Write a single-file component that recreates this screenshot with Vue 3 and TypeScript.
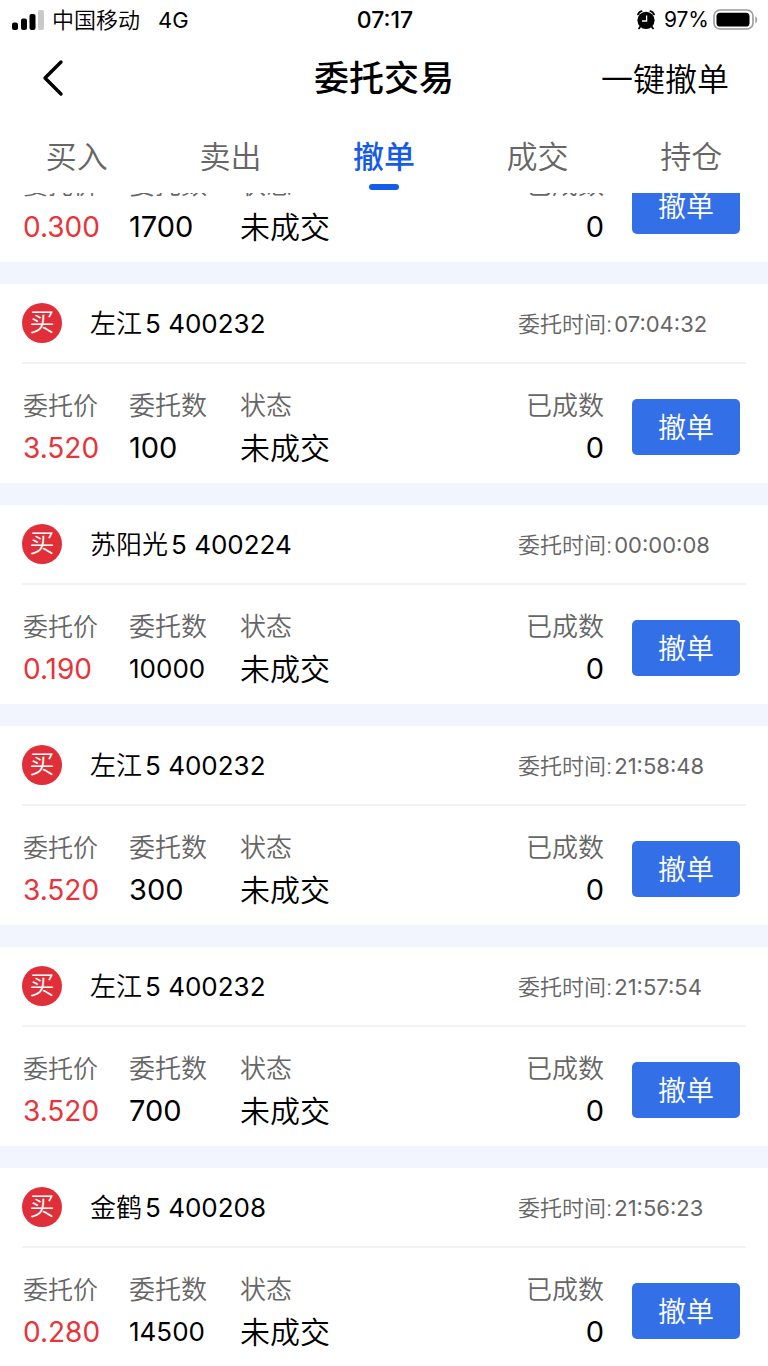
<script setup lang="ts">
import { onMounted, ref } from 'vue'

interface Order {
  id: number
  name: string
  code: string
  time: string
  price: string
  amount: string
  filled: string
}

const tabs: string[] = ['买入', '卖出', '撤单', '成交', '持仓']
const activeTab = ref('撤单')

const orders = ref<Order[]>([
  { id: 1, name: '左江', code: '5 400232', time: '07:04:35', price: '0.300', amount: '1700', filled: '0' },
  { id: 2, name: '左江', code: '5 400232', time: '07:04:32', price: '3.520', amount: '100', filled: '0' },
  { id: 3, name: '苏阳光', code: '5 400224', time: '00:00:08', price: '0.190', amount: '10000', filled: '0' },
  { id: 4, name: '左江', code: '5 400232', time: '21:58:48', price: '3.520', amount: '300', filled: '0' },
  { id: 5, name: '左江', code: '5 400232', time: '21:57:54', price: '3.520', amount: '700', filled: '0' },
  { id: 6, name: '金鹤', code: '5 400208', time: '21:56:23', price: '0.280', amount: '14500', filled: '0' },
])

const list = ref<HTMLElement | null>(null)

onMounted(() => {
  if (list.value) list.value.scrollTop = 130
})
</script>

<template>
  <div class="screen">
    <div class="status">
      <div class="status-left">
        <svg class="signal" width="32" height="20" viewBox="0 0 32 20" aria-hidden="true">
          <rect x="0" y="12.5" width="6" height="7.5" rx="2" />
          <rect x="9" y="8.5" width="6" height="11.5" rx="2" />
          <rect x="17.5" y="4" width="6" height="16" rx="2" />
          <rect x="26" y="0" width="6" height="20" rx="2" fill="#c9c9c9" />
        </svg>
        <span class="carrier">中国移动</span>
        <span class="network">4G</span>
      </div>
      <div class="clock">07:17</div>
      <div class="status-right">
        <svg width="18" height="20" viewBox="0 0 18 20" aria-hidden="true">
          <circle cx="9" cy="10.3" r="8.6" />
          <path d="M1 4.4C1.6 2.8 3 1.6 4.6 1.2M17 4.4C16.4 2.8 15 1.6 13.4 1.2" fill="none" stroke="#000" stroke-width="1.8" stroke-linecap="round" />
          <path d="M3.4 16.4 2 18.4M14.6 16.4 16 18.4" stroke="#000" stroke-width="1.8" stroke-linecap="round" />
          <path d="M9.6 5.4V11H5" fill="none" stroke="#fff" stroke-width="1.3" />
        </svg>
        <span class="percent">97%</span>
        <svg width="45" height="22" viewBox="0 0 45 22" aria-hidden="true">
          <rect x="1" y="1" width="39" height="19" rx="6" fill="#fff" stroke="#9b9b9b" stroke-width="1.6" />
          <rect x="3.5" y="3.7" width="33" height="13.8" rx="3.6" />
          <path d="M42.4 7.2c2.4 1 2.4 6 0 7z" fill="#9b9b9b" />
        </svg>
      </div>
    </div>

    <header class="header">
      <button class="back" type="button" aria-label="返回">
        <svg width="22" height="38" viewBox="0 0 22 38" aria-hidden="true">
          <path d="M19 3 3 19 19 35" fill="none" stroke="#000" stroke-width="3.4" stroke-linecap="round" stroke-linejoin="round" />
        </svg>
      </button>
      <h1>委托交易</h1>
      <button class="cancel-all" type="button">一键撤单</button>
    </header>

    <nav class="tabs">
      <button
        v-for="tab in tabs"
        :key="tab"
        type="button"
        class="tab"
        :class="{ active: tab === activeTab }"
        @click="activeTab = tab"
      >
        {{ tab }}
      </button>
    </nav>

    <main ref="list" class="list">
      <article v-for="order in orders" :key="order.id" class="card">
        <div class="card-head">
          <span class="badge">买</span>
          <h2>{{ order.name }}<span class="code">{{ order.code }}</span></h2>
          <span class="placed">委托时间:<time>{{ order.time }}</time></span>
        </div>
        <div class="card-body">
          <dl class="cost">
            <dt>委托价</dt>
            <dd>{{ order.price }}</dd>
          </dl>
          <dl>
            <dt>委托数</dt>
            <dd class="amount" :class="{ long: order.amount.length > 4 }">{{ order.amount }}</dd>
          </dl>
          <dl>
            <dt>状态</dt>
            <dd class="state">未成交</dd>
          </dl>
          <dl class="filled">
            <dt>已成数</dt>
            <dd class="amount">{{ order.filled }}</dd>
          </dl>
          <button class="cancel" type="button">撤单</button>
        </div>
      </article>
    </main>
  </div>
</template>

<style>
body {
  margin: 0;
  background: #fff;
}
</style>

<style scoped>
.screen {
  display: flex;
  flex-direction: column;
  height: 100vh;
  background: #fff;
  color: #000;
  font-family: Inter, "Noto Sans CJK SC", sans-serif;
}

button {
  padding: 0;
  border: 0;
  background: none;
  color: inherit;
  font-family: inherit;
  cursor: pointer;
}

h1,
h2,
dl,
dd {
  margin: 0;
}

svg {
  display: block;
}

.carrier,
.cancel-all,
.tab,
.badge,
h2,
.placed,
dt,
.state,
.cancel {
  font-weight: 350;
}

.status {
  display: grid;
  grid-template-columns: 1fr auto 1fr;
  align-items: center;
  flex: none;
  height: 40px;
  padding: 0 10px 0 12px;
  font-size: 22px;
  line-height: 40px;
}

.status-left,
.status-right {
  display: flex;
  align-items: center;
}

.status-right {
  justify-content: flex-end;
}

.signal {
  margin-right: 8px;
}

.network {
  margin-left: 18px;
}

.clock {
  font-size: 23px;
  font-weight: 500;
}

.percent {
  margin: 0 4px 0 9px;
  font-size: 21px;
}

.header {
  display: grid;
  grid-template-columns: 1fr auto 1fr;
  align-items: center;
  flex: none;
  height: 76px;
  padding: 0 39px;
}

.back {
  justify-self: start;
  padding-left: 3px;
}

h1 {
  font-size: 35px;
  font-weight: 500;
  line-height: 76px;
}

.cancel-all {
  justify-self: end;
  padding-bottom: 3px;
  font-size: 32px;
}

.tabs {
  display: grid;
  grid-template-columns: repeat(5, 1fr);
  flex: none;
  height: 77px;
}

.tab {
  position: relative;
  padding-top: 4px;
  color: #666;
  font-size: 31px;
  line-height: 73px;
}

.tab.active {
  color: #155bea;
  font-weight: 500;
}

.tab.active::after {
  content: "";
  position: absolute;
  bottom: 3px;
  left: 50%;
  width: 30px;
  height: 6px;
  margin-left: -15px;
  border-radius: 3px;
  background: #155bea;
}

.list {
  flex: 1;
  min-height: 0;
  overflow-y: auto;
  scrollbar-width: none;
}

.card {
  border-bottom: 22px solid #f2f5fe;
}

.card-head {
  display: flex;
  align-items: center;
  height: 78px;
  margin: 0 22px;
  padding-right: 37px;
  border-bottom: 2px solid #f2f2f4;
}

.badge {
  width: 40px;
  height: 40px;
  margin-right: 28px;
  border-radius: 50%;
  background: #e02f38;
  color: #fff;
  font-size: 25px;
  line-height: 38px;
  text-align: center;
}

h2 {
  flex: 1;
  padding-top: 2px;
  font-size: 26px;
  line-height: 40px;
}

.code {
  margin-left: 3px;
  font-weight: 400;
}

.placed {
  width: 191px;
  padding-top: 2px;
  color: #666;
  font-size: 22px;
  line-height: 40px;
  white-space: nowrap;
}

.placed time {
  margin-left: 2px;
  font-weight: 400;
}

.card-body {
  display: grid;
  grid-template-columns: 106px 111px 1fr auto 108px;
  align-items: start;
  padding: 25px 28px 14px 23px;
}

dt {
  color: #666;
  font-size: 26px;
  line-height: 34px;
}

dd {
  margin-top: 4px;
  font-size: 30px;
  line-height: 42px;
}

.amount {
  font-size: 29px;
}

.amount.long {
  font-size: 26px;
}

.cost dt {
  font-size: 25px;
}

.cost dd {
  color: #e9333a;
  font-size: 28px;
}

.filled {
  margin-right: 28px;
  text-align: right;
}

.cancel {
  height: 56px;
  margin-top: 10px;
  padding-bottom: 3px;
  border-radius: 5px;
  background: #3370e8;
  color: #fff;
  font-size: 28px;
}
</style>
